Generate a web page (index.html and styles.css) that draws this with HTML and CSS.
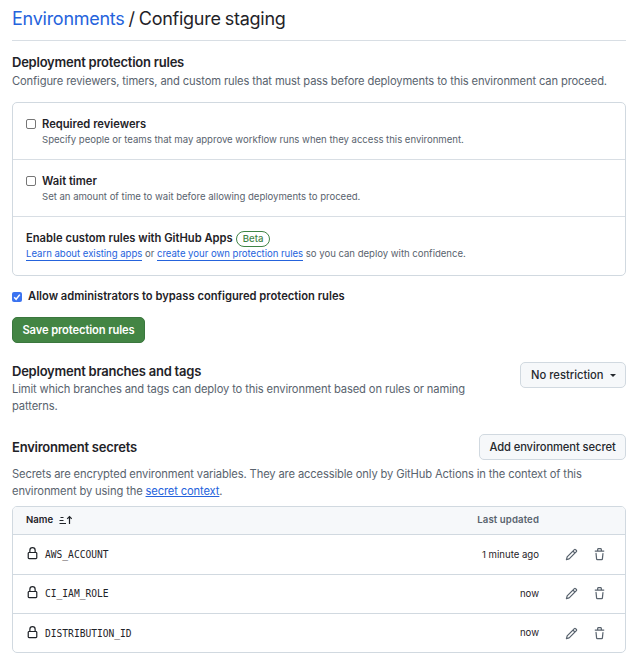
FILE: index.html
```html
<!DOCTYPE html>
<html lang="en">
<head>
<meta charset="utf-8">
<title>Configure staging</title>
<link rel="stylesheet" href="styles.css">
</head>
<body>
<svg class="sprite" aria-hidden="true">
  <symbol id="lock" viewBox="0 0 16 16"><path d="M4 4a4 4 0 0 1 8 0v2h.25c.966 0 1.75.784 1.75 1.75v5.5A1.75 1.75 0 0 1 12.25 15h-8.5A1.75 1.75 0 0 1 2 13.25v-5.5C2 6.784 2.784 6 3.75 6H4Zm8.25 3.5h-8.5a.25.25 0 0 0-.25.25v5.5c0 .138.112.25.25.25h8.5a.25.25 0 0 0 .25-.25v-5.5a.25.25 0 0 0-.25-.25ZM10.5 6V4a2.5 2.5 0 1 0-5 0v2Z"/></symbol>
  <symbol id="pencil" viewBox="0 0 16 16"><path d="M11.013 1.427a1.75 1.75 0 0 1 2.474 0l1.086 1.086a1.75 1.75 0 0 1 0 2.474l-8.61 8.61c-.21.21-.47.364-.756.445l-3.251.93a.75.75 0 0 1-.927-.928l.929-3.25c.081-.286.235-.547.445-.758l8.61-8.61Zm.176 4.823L9.75 4.81l-6.286 6.287a.253.253 0 0 0-.064.108l-.558 1.953 1.953-.558a.253.253 0 0 0 .108-.064Zm1.238-3.763a.25.25 0 0 0-.354 0L10.811 3.75l1.439 1.44 1.263-1.263a.25.25 0 0 0 0-.354Z"/></symbol>
  <symbol id="trash" viewBox="0 0 16 16"><path d="M11 1.75V3h2.25a.75.75 0 0 1 0 1.5H2.75a.75.75 0 0 1 0-1.5H5V1.75C5 .784 5.784 0 6.75 0h2.5C10.216 0 11 .784 11 1.75ZM4.496 6.675l.66 6.6a.25.25 0 0 0 .249.225h5.19a.25.25 0 0 0 .249-.225l.66-6.6a.75.75 0 0 1 1.492.149l-.66 6.6A1.748 1.748 0 0 1 10.595 15h-5.19a1.75 1.75 0 0 1-1.741-1.575l-.66-6.6a.75.75 0 1 1 1.492-.15ZM6.5 1.75V3h3V1.75a.25.25 0 0 0-.25-.25h-2.5a.25.25 0 0 0-.25.25Z"/></symbol>
  <symbol id="sort" viewBox="0 0 13 13"><path d="M1.500 3.500h3M.5 6.500h4M.5 9.500h6.500M10.500 10V2.500M8.200 4.800l2.300-2.300 2.300 2.300"/></symbol>
</svg>
<main class="page">
  <h1 class="title"><a class="title-link" href="#">Environments</a> / Configure staging</h1>

  <section>
    <h2 class="heading">Deployment protection rules</h2>
    <p class="desc">Configure reviewers, timers, and custom rules that must pass before deployments to this environment can proceed.</p>
    <div class="card">
      <label class="rule">
        <span class="check"></span>
        <span class="rule-text"><b class="label">Required reviewers</b><span class="note">Specify people or teams that may approve workflow runs when they access this environment.</span></span>
      </label>
      <label class="rule">
        <span class="check"></span>
        <span class="rule-text"><b class="label">Wait timer</b><span class="note">Set an amount of time to wait before allowing deployments to proceed.</span></span>
      </label>
      <div class="rule rule-last">
        <div class="rule-text">
          <div class="custom"><b class="label custom-label">Enable custom rules with GitHub Apps</b><span class="beta">Beta</span></div>
          <span class="note"><a class="note-link" href="#">Learn about existing apps</a> or <a class="note-link" href="#">create your own protection rules</a> so you can deploy with confidence.</span>
        </div>
      </div>
    </div>
    <label class="bypass">
      <span class="check checked"><svg viewBox="0 0 10 10"><path d="M2.2 5.3 4.1 7.3 7.8 2.6"/></svg></span>
      <b class="label bypass-label">Allow administrators to bypass configured protection rules</b>
    </label>
    <button class="btn primary">Save protection rules</button>
  </section>

  <section class="branches">
    <div>
      <h2 class="heading">Deployment branches and tags</h2>
      <p class="desc limit">Limit which branches and tags can deploy to this environment based on rules or naming<br>patterns.</p>
    </div>
    <button class="btn dropdown">No restriction<span class="caret"></span></button>
  </section>

  <section>
    <div class="secrets-head">
      <h2 class="heading secrets-title">Environment secrets</h2>
      <button class="btn add">Add environment secret</button>
    </div>
    <p class="desc secrets-desc">Secrets are encrypted environment variables. They are accessible only by GitHub Actions in the context of this<br>environment by using the <a class="desc-link" href="#">secret context</a>.</p>
    <div class="table">
      <div class="row head"><span class="name">Name</span><svg class="sort"><use href="#sort"/></svg><span class="updated">Last updated</span></div>
      <div class="row"><svg class="icon lock"><use href="#lock"/></svg><code class="secret">AWS_ACCOUNT</code><span class="time">1 minute ago</span><svg class="icon"><use href="#pencil"/></svg><svg class="icon"><use href="#trash"/></svg></div>
      <div class="row short"><svg class="icon lock"><use href="#lock"/></svg><code class="secret">CI_IAM_ROLE</code><span class="time">now</span><svg class="icon"><use href="#pencil"/></svg><svg class="icon"><use href="#trash"/></svg></div>
      <div class="row short"><svg class="icon lock"><use href="#lock"/></svg><code class="secret">DISTRIBUTION_ID</code><span class="time">now</span><svg class="icon"><use href="#pencil"/></svg><svg class="icon"><use href="#trash"/></svg></div>
    </div>
  </section>
</main>
</body>
</html>
```
FILE: styles.css
```css
* { box-sizing: border-box; }
body { margin: 0; background: #fff; color: #1f2328; font-family: Inter, "Liberation Sans", sans-serif; }
.sprite { display: none; }
.page { padding: 0 17px 0 12px; white-space: nowrap; }
h1, h2, p { margin: 0; }
a { color: #2563dc; text-decoration: none; }
.title { height: 41px; padding-top: 5px; border-bottom: 1px solid #d8dee4; font-size: 18px; font-weight: 400; line-height: 27px; letter-spacing: -0.26px; word-spacing: -0.8px; }
.heading { font-size: 13px; font-weight: 600; line-height: 19px; letter-spacing: -0.23px; padding-top: 12px; height: 31px; }
.desc { color: #59636e; font-size: 11.2px; line-height: 17px; letter-spacing: -0.135px; margin-top: 1px; }
.card { margin-top: 12px; height: 174px; border: 1px solid #d1d9e0; border-radius: 5px; }
.rule { display: flex; gap: 6px; height: 57px; padding: 13px 13px 0; border-bottom: 1px solid #d8dee4; }
.rule-last { border-bottom: 0; }
.check { flex: none; width: 10px; height: 10px; margin-top: 3px; border: 1px solid #767676; border-radius: 2px; }
.rule-text { display: flex; flex-direction: column; }
.label { font-size: 11.2px; font-weight: 600; line-height: 17px; }
.note { font-size: 9.6px; line-height: 14px; letter-spacing: -0.03px; color: #59636e; }
.custom { display: flex; align-items: center; gap: 3px; height: 17px; }
.beta { height: 16px; padding: 0 6px; border: 1px solid #3f8445; border-radius: 8px; color: #3f8445; font-size: 9.6px; font-weight: 500; line-height: 14px; }
.note-link { border-bottom: 1px solid #2563dc; padding-bottom: 1px; }
.bypass { display: flex; align-items: center; gap: 6px; height: 17px; margin-top: 12px; }
.checked { margin: 1px 0 0; border: 0; background: #3b73f0; }
.checked svg { display: block; width: 10px; height: 10px; fill: none; stroke: #fff; stroke-width: 1.5; }
.btn { height: 26px; padding: 0 10px; border: 1px solid #d1d9e0; border-radius: 5px; background: #f6f8fa; color: #25292e; font-family: inherit; font-size: 11.2px; font-weight: 500; line-height: 24px; white-space: nowrap; }
.primary { display: block; margin-top: 12px; width: 133px; padding: 0 9px; border-color: #3a773e; background: #438544; color: #fff; font-weight: 600; letter-spacing: -0.12px; }
.branches { display: flex; justify-content: space-between; align-items: flex-start; margin-top: 19px; }
.branches .heading { height: 19px; padding: 0; }
.limit { margin-top: 0; }
.dropdown { width: 106px; padding-right: 9px; display: flex; align-items: center; justify-content: space-between; }
.caret { border: 3.5px solid transparent; border-top-color: #25292e; border-bottom: 0; }
.secrets-head { display: flex; justify-content: space-between; align-items: center; margin-top: 19px; }
.secrets-title { height: 19px; padding: 0; }
.add { width: 147px; padding: 0 9px; letter-spacing: -0.09px; }
.secrets-desc { margin-top: 6px; }
.desc-link { text-decoration: underline; }
.table { margin-top: 6px; border: 1px solid #d1d9e0; border-radius: 5px; overflow: hidden; }
.row { display: flex; align-items: center; height: 40px; padding: 0 19px 0 13px; border-bottom: 1px solid #d1d9e0; }
.short { height: 39px; padding-bottom: 1px; }
.row:last-child { height: 38px; padding-bottom: 0; border-bottom: 0; }
.head { height: 28px; padding-bottom: 2px; background: #f6f8fa; font-size: 9.6px; font-weight: 600; }
.sort { width: 13px; height: 13px; margin: 2px 0 0 6px; overflow: visible; fill: none; stroke: #1f2328; stroke-width: 1.2; }
.updated { margin-left: auto; margin-right: 67px; color: #59636e; letter-spacing: 0.12px; }
.icon { flex: none; width: 13px; height: 13px; margin-right: 15px; fill: #59636e; }
.icon:last-child { margin-right: 0; }
.lock { margin: -2px 6px 0 0; fill: #1f2328; }
.secret { font-family: "DejaVu Sans Mono", monospace; font-size: 9.6px; }
.time { margin: -1px 26px 0 auto; font-size: 9.6px; }
```
